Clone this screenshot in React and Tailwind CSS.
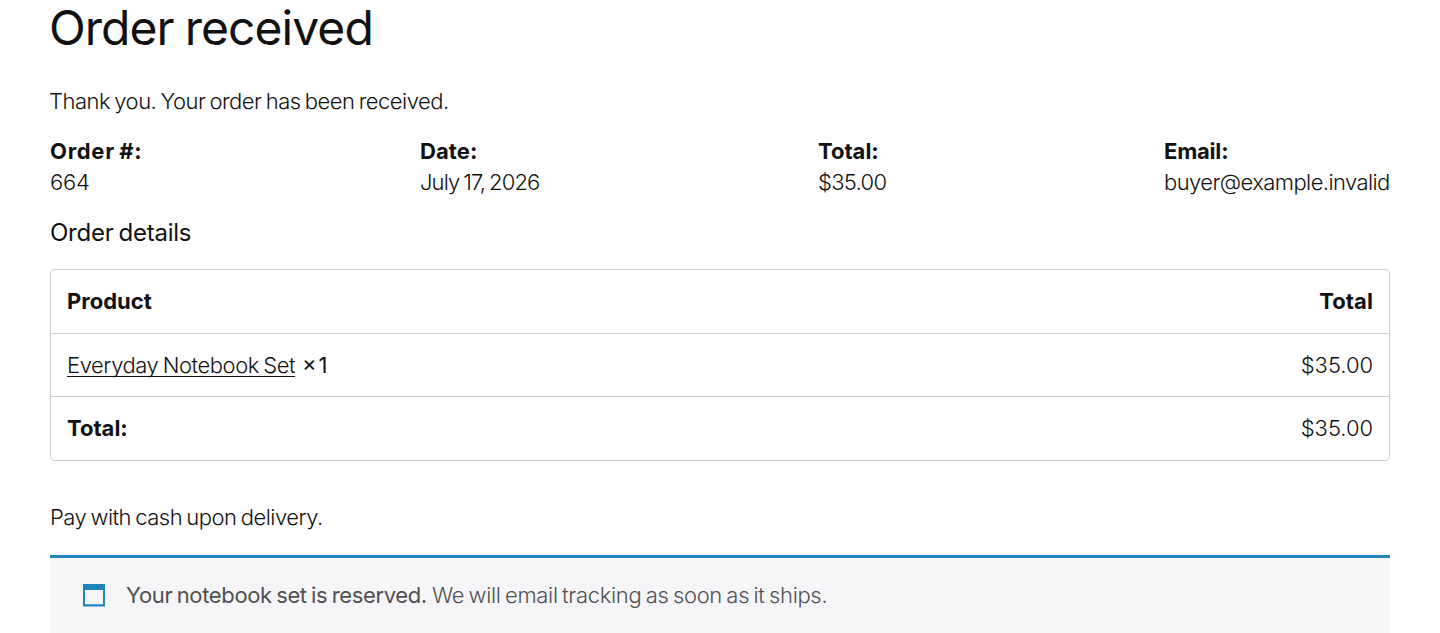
import React from 'react';

const summary = [
  { label: 'Order #:', value: '664', width: 'w-[92px]', labelTracking: 'tracking-[0.7px]', valueTracking: 'tracking-[-0.2px]' },
  { label: 'Date:', value: 'July 17, 2026', width: 'w-[120px]', labelTracking: 'tracking-[0.1px]', valueTracking: 'tracking-[-0.85px]' },
  { label: 'Total:', value: '$35.00', width: 'w-[68px]', labelTracking: 'tracking-normal', valueTracking: 'tracking-[-0.7px]' },
  { label: 'Email:', value: 'buyer@example.invalid', width: 'w-[226px]', labelTracking: 'tracking-[-0.2px]', valueTracking: 'tracking-[-0.58px]' }
];

function OrderTable() {
  return (
    <div className="mt-[21px] rounded border border-[#cfcfcf]">
      <div className="flex h-[63px] items-center justify-between px-4 font-bold">
        <span className="tracking-normal">Product</span>
        <span className="tracking-[0.1px]">Total</span>
      </div>
      <div className="flex h-[63px] items-center justify-between border-t border-[#cfcfcf] px-4">
        <div className="flex items-center">
          <a href="#" className="tracking-[-0.44px] underline decoration-1 underline-offset-[3px] [text-decoration-skip-ink:none]">
            Everyday Notebook Set
          </a>
          <strong className="ml-[7px] flex items-center gap-[3px] font-normal tracking-[-1.2px]">
            <span className="-mt-[3px]">×</span>
            <span>1</span>
          </strong>
        </div>
        <span className="tracking-[-0.05px]">$35.00</span>
      </div>
      <div className="flex h-[64px] items-center justify-between border-t border-[#cfcfcf] px-4">
        <span className="font-bold tracking-normal">Total:</span>
        <span className="tracking-[-0.05px]">$35.00</span>
      </div>
    </div>
  );
}

function Notice() {
  return (
    <div className="mt-[22px] flex h-[78px] items-start border-t-[3px] border-[#1e85be] bg-[#f6f5f8] pt-[22px] pl-8 text-[#515151]">
      <svg className="mt-[3px] mr-5 h-6 w-6 shrink-0" viewBox="0 0 24 24" fill="#1e85be" aria-hidden="true">
        <path fillRule="evenodd" d="M1 1h22v22.4H1zM3 7v14.2h18V7z" />
      </svg>
      <p className="whitespace-nowrap">
        <strong className="inline-block w-[306px] font-normal tracking-[-0.35px]">Your notebook set is reserved.</strong>
        <span className="tracking-[-0.32px]">We will email tracking as soon as it ships.</span>
      </p>
    </div>
  );
}

function App() {
  return (
    <div className="h-[633px] overflow-hidden bg-white px-[50px] font-['Inter',sans-serif] text-[22px] leading-[31px] font-light tracking-[-0.5px] text-[#111] [word-spacing:-1.5px]">
      <h1 className="-ml-px h-[56px] text-[48px] leading-[56px] font-normal tracking-[-0.95px]">Order received</h1>
      <p className="mt-[30px] -ml-px tracking-[-0.5px]">Thank you. Your order has been received.</p>

      <ul className="mt-[19px] flex justify-between">
        {summary.map((item) => (
          <li key={item.label} className={`${item.width} whitespace-nowrap`}>
            <strong className={`block font-bold ${item.labelTracking}`}>{item.label}</strong>
            <span className={`block ${item.valueTracking}`}>{item.value}</span>
          </li>
        ))}
      </ul>

      <h2 className="mt-[19px] text-[24px] leading-[31px] font-normal tracking-[-0.24px]">Order details</h2>
      <OrderTable />

      <p className="mt-[41px]">Pay with cash upon delivery.</p>
      <Notice />
    </div>
  );
}

export default App;
